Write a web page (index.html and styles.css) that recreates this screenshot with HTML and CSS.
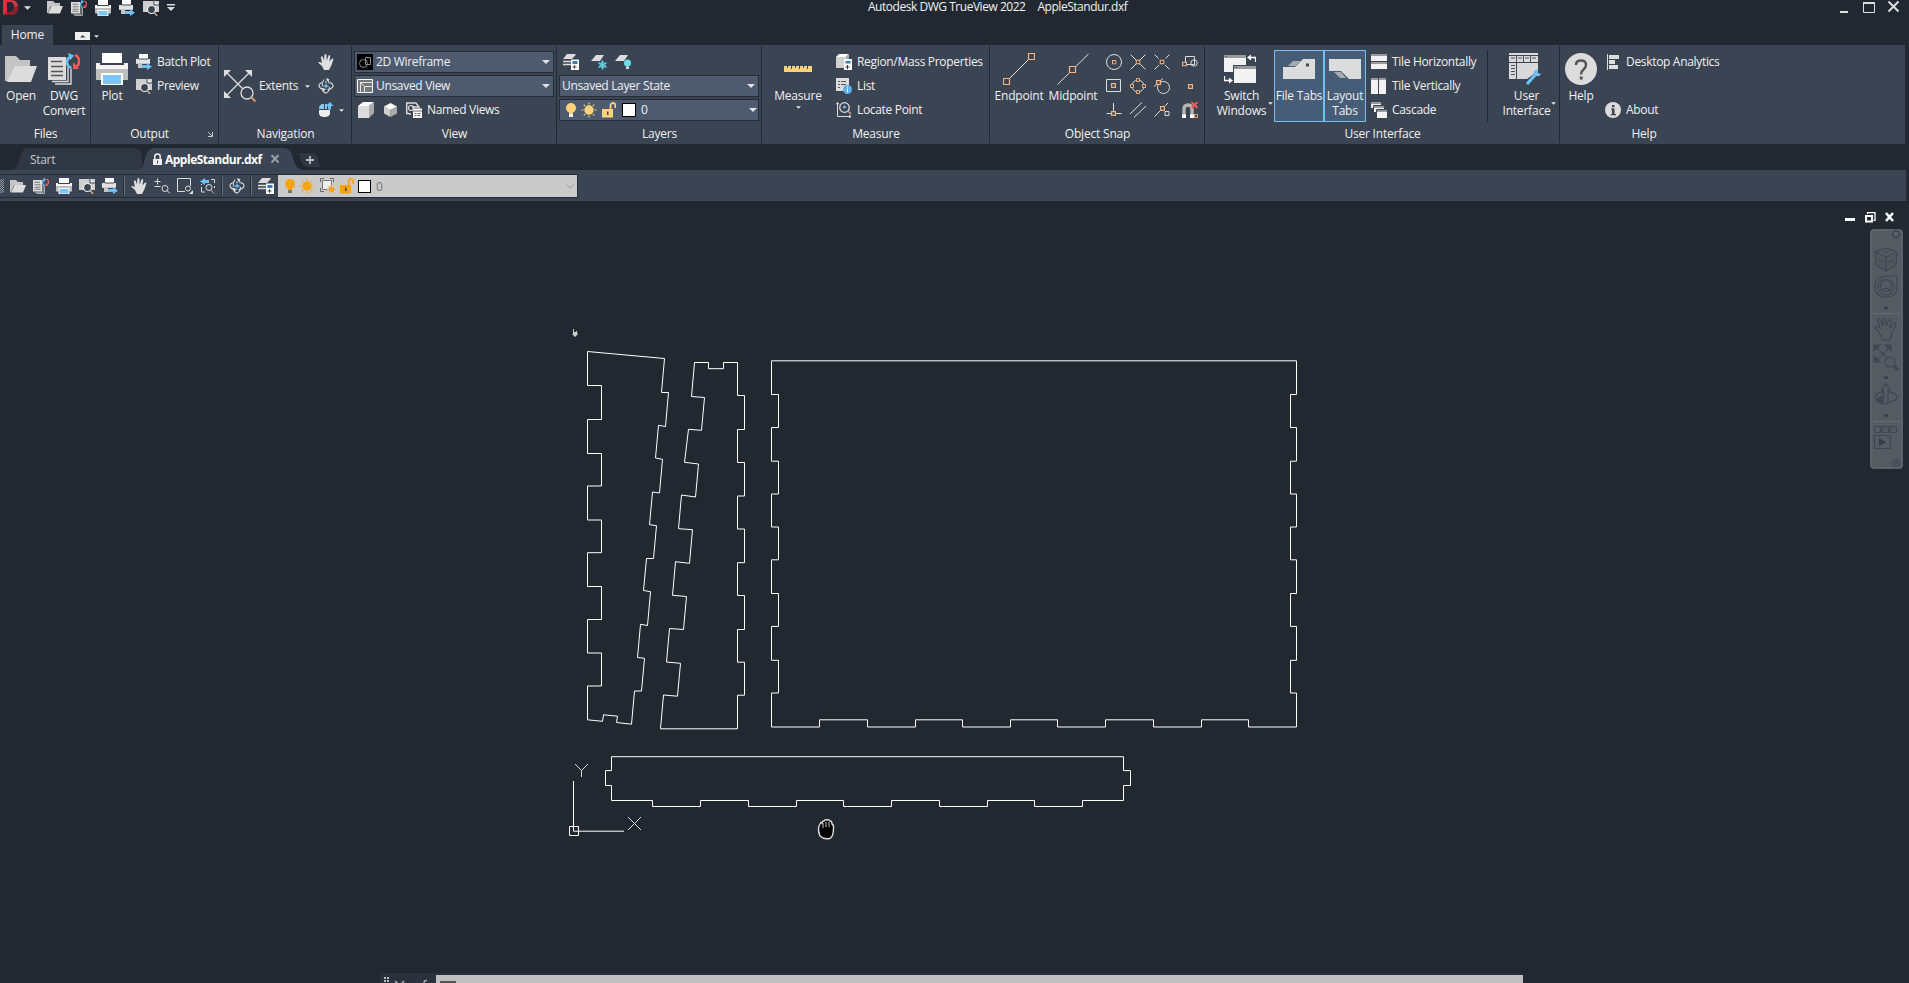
FILE: index.html
```html
<!DOCTYPE html>
<html lang="en">
<head>
<meta charset="utf-8">
<title>Autodesk DWG TrueView 2022</title>
<link rel="stylesheet" href="styles.css">
</head>
<body>
<svg class="defs" width="0" height="0">
  <symbol id="folder" viewBox="0 0 16 13"><path d="M0 12V0h6l2 2h5v3H4L1 12z" fill="#c6c6c6"/><path d="M4.500 5H16l-3 7.500H1z" fill="#dcdcdc"/></symbol>
  <symbol id="convert" viewBox="0 0 32 32"><path d="M0 4h18v23H0z" fill="#dcdcdc"/><path d="M3 8.500h11M3 13.500h12M3 18.500h12M3 22.500h12" stroke="#555" stroke-width="1.500"/><path d="M4 28.500h16V14M7 31h16V16" stroke="#dcdcdc" stroke-width="1.400" fill="none"/><path d="M23.500 15c-6-2-6-10 0-11.500" stroke="#6fc0f5" stroke-width="2.600" fill="none"/><path d="M20 0l6 2.500-4 5z" fill="#6fc0f5"/><path d="M27 2c5 2 6 10 0 12" stroke="#f25b5b" stroke-width="2.600" fill="none"/><path d="M25 9v7h6z" fill="#f25b5b"/></symbol>
  <symbol id="printer" viewBox="0 0 32 32"><path d="M6 0h20v10H6z" fill="#fff"/><path d="M0 10h32v8H0z" fill="#f4f4f4"/><path d="M0 16h32v11H0z" fill="#bdbdbd"/><path d="M4 10h24v2H4z" fill="#3b4453"/><path d="M5 20h22v12H5z" fill="#fff"/><path d="M7 22h18v9H7z" fill="#7cc5f8"/></symbol>
  <symbol id="batch" viewBox="0 0 16 16"><path d="M3 0h9v5H3z" fill="#fff"/><path d="M0 5h14v4H0z" fill="#e2e2e2"/><path d="M3 4.500h9v1H3z" fill="#3b4453"/><path d="M0 9h14v1H0zM2 10h4v4H2z" fill="#c5c5c5"/><path d="M6 11h5V9l5 3.800L11 16v-2H6z" fill="#6fc0f5"/></symbol>
  <symbol id="preview" viewBox="0 0 16 16"><path d="M0 1h10l6 0v11H0z" fill="#cfcfcf"/><path d="M11 0v5h5" fill="#eee" stroke="#3b4453"/><circle cx="8.500" cy="9.500" r="4" fill="#3b4453" stroke="#eee" stroke-width="1.200"/><path d="M11.300 12.300L14 16" stroke="#d5b58e" stroke-width="1.400"/></symbol>
  <symbol id="hand" viewBox="0 0 16 16"><path d="M6 16L4 12 0 8.600q1.500-1.600 4 .7L2.800 3Q4 1.500 5 3.500l1 3L6.400.8q1.200-1.500 2 0L8.800 6.500 10.500 1.500q1.300-1 1.700.5L11.500 7.500 14 4.500q1.500-.5 1.300 1L13.500 11 11 16z" fill="#dedede"/></symbol>
  <symbol id="orbit" viewBox="0 0 16 16"><path d="M6 1.500Q4 4 4.200 8.500M5 12q1 3 3 3 3-.5 3.500-6M11.300 5.500Q10.500 1.500 8.500 1" fill="none" stroke="#ddd" stroke-width="1.100"/><path d="M4 4.500Q.5 6 1 8q1 3 5 3.500M12 4.500Q15.500 6 15 8q-1 3-5.500 3.800M7 4h2" fill="none" stroke="#ddd" stroke-width="1.100"/><path d="M8 5.500v5M5.500 8h5" stroke="#6fc0f5" stroke-width="1.300"/><path d="M4 9.500l4 2-3.500 2z" fill="#ddd"/><path d="M8.500 0l3 1.500-2.500 2z" fill="#ddd"/></symbol>
  <symbol id="layers" viewBox="0 0 16 16"><path d="M4 0h9L9 5H0z" fill="#dcdcdc"/><path d="M0 7.500h8M0 10.500h8M8 4l4-3" stroke="#dcdcdc" stroke-width="1.500"/><path d="M8 5.500h8V16H8z" fill="#fff"/><path d="M9.500 7h5v3h-5z" fill="#357dbd"/><path d="M9.500 13h4M11.500 11.200v3.500" stroke="#444"/></symbol>
  <symbol id="bulb" viewBox="0 0 10 15"><circle cx="5" cy="5" r="5"/><path d="M3 9h4v2H3z"/><path d="M3 11h4v3H3z" fill="var(--base,#f5f5f5)"/></symbol>
  <symbol id="sun" viewBox="0 0 16 16"><circle cx="8" cy="8" r="4.700"/><path d="M8 .5v2M8 13.500v2M.5 8h2M13.500 8h2M2.700 2.700l1.500 1.500M11.800 11.800l1.500 1.500M13.300 2.700l-1.500 1.500M4.200 11.800l-1.500 1.500" stroke="currentColor" stroke-width="1.100"/></symbol>
  <symbol id="lock" viewBox="0 0 14 16"><path d="M8.500 7V4Q8.500 1 11 1t2.300 3v2" fill="none" stroke="currentColor" stroke-width="1.800"/><path d="M0 7h11v8.500H0z"/><path d="M5 9.500h1.500V13H5z" fill="#3b4453"/></symbol>
  <symbol id="down" viewBox="0 0 8 4"><path d="M0 0h8L4 4z" fill="#e3e3e3"/></symbol>
  <symbol id="box" viewBox="0 0 5 5"><path d="M.6.6h3.800v3.800H.6z" fill="#3b4453" stroke="#f7b27f" stroke-width="1.200"/></symbol>
</svg>

<header class="titlebar">
  <svg class="logo" width="16" height="15" viewBox="0 0 16 15"><path fill-rule="evenodd" d="M0 0h8q7 0 7 7t-7 8H0zM4 2v10h3q4 0 4-5T7 2z" fill="#d4343f"/><path d="M0 15l4-3h3q4 0 4-5l4-1q0 9-7 9z" fill="#8e1f2b"/></svg>
  <svg class="qa-arrow" width="7" height="4"><use href="#down"/></svg>
  <div class="quick">
    <svg width="16" height="13"><use href="#folder"/></svg>
    <svg width="16" height="16"><use href="#convert"/></svg>
    <svg width="16" height="16"><use href="#printer"/></svg>
    <svg width="16" height="16"><use href="#batch"/></svg>
    <svg width="16" height="16"><use href="#preview"/></svg>
    <svg width="8" height="7" viewBox="0 0 8 7"><path d="M0 0h8v1.500H0zM0 3h8L4 7z" fill="#ddd"/></svg>
  </div>
  <div class="caption"><span>Autodesk DWG TrueView 2022</span><span>AppleStandur.dxf</span></div>
  <svg class="wincontrols" width="60" height="14" viewBox="0 0 60 14"><path d="M0 11h8v2H0z" fill="#ddd"/><path d="M23.500 2.500h11v10h-11z" fill="none" stroke="#ddd"/><path d="M23 2h12v2H23z" fill="#ddd"/><path d="M48.500 1.500l10 10M58.500 1.500l-10 10" stroke="#ddd" stroke-width="2"/></svg>
</header>

<nav class="ribbontabs">
  <span class="home">Home</span>
  <svg class="toggle" width="15" height="8"><path d="M0 0h15v8H0z" fill="#eee"/><path d="M5 5.500h5.500L7.700 3z" fill="#444"/></svg>
  <svg width="5" height="3"><use href="#down"/></svg>
</nav>

<main class="ribbon">
  <section class="panel p-files">
    <div class="body">
      <div class="big"><svg width="32" height="32" viewBox="0 0 32 32"><path d="M0 28V3h11l4 4h10v6H9L3 28z" fill="#c4c4c4"/><path d="M9 13h23l-6 16H2z" fill="#dcdcdc"/></svg><span>Open</span></div>
      <div class="big"><svg width="32" height="32"><use href="#convert"/></svg><span>DWG<br>Convert</span></div>
    </div>
    <h2>Files</h2>
  </section>
  <section class="panel p-output">
    <div class="body">
      <div class="big"><svg width="32" height="32"><use href="#printer"/></svg><span>Plot</span></div>
      <div class="rows">
        <div><svg width="16" height="16"><use href="#batch"/></svg>Batch Plot</div>
        <div><svg width="16" height="16"><use href="#preview"/></svg>Preview</div>
      </div>
    </div>
    <h2>Output</h2>
    <svg class="launcher" width="5" height="5"><path d="M0 0l4 4M4.500 0v4.500H0" stroke="#ccc" fill="none"/></svg>
  </section>
  <section class="panel p-nav">
    <div class="body">
      <div class="extents"><svg width="32" height="32" viewBox="0 0 32 32"><path d="M2 2l26 26M26 2L2 26" stroke="#ddd" stroke-width="1.300"/><path d="M0 0h7L0 7zM28 0v7l-7-7zM0 28v-7l7 7z" fill="#ddd"/><circle cx="23" cy="23" r="6" fill="#3b4453" stroke="#ddd" stroke-width="1.300"/><path d="M27 27l4.500 4.500" stroke="#c99b6a" stroke-width="2"/></svg><span>Extents</span><svg width="5" height="3"><use href="#down"/></svg></div>
      <div class="rows tools">
        <div><svg width="16" height="16"><use href="#hand"/></svg></div>
        <div><svg width="16" height="16"><use href="#orbit"/></svg></div>
        <div><svg width="16" height="16" viewBox="0 0 16 16"><path d="M1 8h11v3q0 4-5.500 4T1 11z" fill="#eee"/><path d="M1 7q0-4 3-5h2v5zM7 2h2v5H7z" fill="#8cc7ee"/><path d="M10 7.500V4H8l4-4 3.500 4H13v3.500z" fill="#6fc0f5"/></svg><svg width="5" height="3"><use href="#down"/></svg></div>
      </div>
    </div>
    <h2>Navigation</h2>
  </section>
  <section class="panel p-view">
    <div class="body stack">
      <div class="combo"><svg width="16" height="16" viewBox="0 0 16 16"><path d="M0 0h16v16H0z" fill="#000"/><circle cx="6.500" cy="9.500" r="4" fill="none" stroke="#8b8b8b"/><path d="M8.500 3.500h5v7h-5z" fill="none" stroke="#8b8b8b"/></svg><span>2D Wireframe</span><svg width="8" height="4"><use href="#down"/></svg></div>
      <div class="combo"><svg width="16" height="14" viewBox="0 0 16 14"><path d="M.5.500h15v13H.5z" fill="#777" stroke="#fff"/><path d="M3.500 13.500v-10h12M7.500 13.500v-6h8" fill="none" stroke="#e5e5e5"/><path d="M3.500 3.500l4 4" stroke="#ddd"/></svg><span>Unsaved View</span><svg width="8" height="4"><use href="#down"/></svg></div>
      <div class="line views">
        <svg width="16" height="16" viewBox="0 0 16 16"><path d="M0 4h11v12H0z" fill="#dcdcdc"/><path d="M0 4l5-4h11l-5 4z" fill="#fff"/><path d="M11 4l5-4v11l-5 5z" fill="#aaa"/></svg>
        <svg width="13" height="14" viewBox="0 0 13 14"><path d="M6.500 0L13 3.500 6.500 7 0 3.500z" fill="#fff"/><path d="M0 3.500L6.500 7v7L0 10.500z" fill="#d0d0d0"/><path d="M13 3.500L6.500 7v7l6.500-3.500z" fill="#aaa"/></svg>
        <svg width="16" height="16" viewBox="0 0 16 16"><path d="M.7 10V1H10l3 4H6M3 11.500H.7v-3M5 12H3" fill="none" stroke="#ddd" stroke-width="1.400"/><circle cx="5" cy="6" r="2.500" fill="none" stroke="#ddd" stroke-width="1.200"/><path d="M7 6.500h9V16H7z" fill="#fff"/><path d="M7 9h9M8.500 11.500h2M8.500 13.500h2M11.500 11.500h3M11.500 13.500h3" stroke="#666"/></svg>
        <span>Named Views</span>
      </div>
    </div>
    <h2>View</h2>
  </section>
  <section class="panel p-layers">
    <div class="body stack">
      <div class="line layertools">
        <svg width="16" height="16"><use href="#layers"/></svg>
        <svg width="16" height="16" viewBox="0 0 16 16"><path d="M5 1h8L9 7H0z" fill="#dcdcdc"/><path d="M11.500 6.500v9M7.500 8.700l8 4.600M15.500 8.700l-8 4.600" stroke="#63cfe0" stroke-width="1.500"/><circle cx="11.500" cy="11" r="2.600" fill="none" stroke="#63cfe0"/></svg>
        <svg width="16" height="16" viewBox="0 0 16 16"><path d="M5 1h8L9 7H0z" fill="#dcdcdc"/><circle cx="12.500" cy="9" r="3.500" fill="#6fdcea"/><path d="M11.200 12.500h2.600V15h-2.600z" fill="#eee"/></svg>
      </div>
      <div class="combo"><span>Unsaved Layer State</span><svg width="8" height="4"><use href="#down"/></svg></div>
      <div class="combo layer"><svg width="10" height="15"><use href="#bulb"/></svg><svg width="16" height="16"><use href="#sun"/></svg><svg width="14" height="16"><use href="#lock"/></svg><i class="swatch"></i><span>0</span><svg width="8" height="4"><use href="#down"/></svg></div>
    </div>
    <h2>Layers</h2>
  </section>
  <section class="panel p-measure">
    <div class="body">
      <div class="big"><svg width="32" height="32" viewBox="0 0 32 32"><path d="M2 13h28v6H2z" fill="#ffd27b"/><path d="M5.500 13v2M9.500 13v3M13.500 13v2M17.500 13v3M21.500 13v2M25.500 13v3" stroke="#3b4453"/></svg><span>Measure</span><svg class="under" width="5" height="3"><use href="#down"/></svg></div>
      <div class="rows">
        <div><svg width="16" height="16" viewBox="0 0 16 16"><path d="M0 3h10v11H0z" fill="#d0d0d0"/><path d="M0 3l3-3h10l-3 3z" fill="#fff"/><path d="M10 3l3-3v6h-3z" fill="#aaa"/><path d="M8 5h8v11H8z" fill="#fff"/><path d="M9.500 7h5v2.500h-5z" fill="#357dbd"/><path d="M9.500 13h4M11.500 11v4" stroke="#333"/></svg>Region/Mass Properties</div>
        <div><svg width="16" height="16" viewBox="0 0 16 16"><path d="M0 0h13v13H0z" fill="#dcdcdc"/><path d="M2 3.500h2M5 3.500h5M2 6.500h2M5 6.500h5M2 9.500h2" stroke="#555"/><circle cx="11.500" cy="11.500" r="4.500" fill="#5db0ea"/><path d="M11.500 10.500v4M11.500 8.500v1.200" stroke="#fff"/></svg>List</div>
        <div><svg width="16" height="16" viewBox="0 0 16 16"><path d="M1.500 1v13.500H15M0 2.500L1.500.5 3 2.500M13 13l2 1.500-2 1.500" fill="none" stroke="#ddd"/><circle cx="8.500" cy="5.500" r="4.800" fill="none" stroke="#ddd" stroke-width="1.300"/><circle cx="8.500" cy="5" r="1.500" fill="#6fc0f5"/><path d="M12 9l3 3" stroke="#c9a77f" stroke-width="1.500"/></svg>Locate Point</div>
      </div>
    </div>
    <h2>Measure</h2>
  </section>
  <section class="panel p-snap">
    <div class="body">
      <div class="big"><svg width="32" height="32" viewBox="0 0 32 32"><path d="M3 29L29 3" stroke="#ddd"/><path d="M.5 25.500h6v6h-6zM25.500.5h6v6h-6z" fill="#3b4453" stroke="#f7b27f" stroke-width="1.200"/></svg><span>Endpoint</span></div>
      <div class="big"><svg width="32" height="32" viewBox="0 0 32 32"><path d="M.5 31.500l31-30.500" stroke="#ddd"/><path d="M12.500 13.500h6v6h-6z" fill="#3b4453" stroke="#f7b27f" stroke-width="1.200"/></svg><span>Midpoint</span></div>
      <div class="snapgrid">
        <svg viewBox="0 0 16 16"><circle cx="8" cy="8" r="7.500"/><use href="#box" x="6" y="6" width="4.500" height="4.500"/></svg>
        <svg viewBox="0 0 16 16"><path d="M.5.500l15 15M15.500.5l-15 15"/><use href="#box" x="5.500" y="5.500" width="5" height="5"/></svg>
        <svg viewBox="0 0 16 16"><path d="M.5.500l4 4M11 11l4.500 4.500M15.500.500l-4 4M5 11L.5 15.500"/><use href="#box" x="5.500" y="5.500" width="5" height="5"/></svg>
        <svg viewBox="0 0 16 16"><path d="M3.500 8V2.500h9v8M5 10.500h8"/><circle cx="12" cy="9" r="3.200"/><use href="#box" x="0" y="7.500" width="5" height="5"/></svg>
        <svg viewBox="0 0 16 16"><path d="M.5 1.500h14v12H.5z"/><use href="#box" x="5" y="5" width="5" height="5"/></svg>
        <svg viewBox="0 0 16 16"><circle cx="8" cy="8" r="6"/><use href="#box" x="6" y="0" width="4" height="4"/><use href="#box" x="6" y="12" width="4" height="4"/><use href="#box" x="0" y="6" width="4" height="4"/><use href="#box" x="12" y="6" width="4" height="4"/></svg>
        <svg viewBox="0 0 16 16"><circle cx="9.500" cy="9.500" r="6"/><path d="M0 8.500L9 .5"/><use href="#box" x="2" y="2" width="5" height="5"/></svg>
        <svg viewBox="0 0 16 16"><use href="#box" x="6" y="6" width="5" height="5"/></svg>
        <svg viewBox="0 0 16 16"><path d="M.5 11.500h15M7.500 1v10"/><use href="#box" x="5" y="9" width="5" height="5"/></svg>
        <svg viewBox="0 0 16 16"><path d="M0 12L12 .5M4 15.500L16 4"/></svg>
        <svg viewBox="0 0 16 16"><path d="M.5 14.500L14 1M11 9.500h4v4h-4zM9 7l2 2"/><use href="#box" x="6" y="4" width="5" height="5"/></svg>
        <svg viewBox="0 0 16 16"><path d="M2 13V7.500q0-4.500 4-4.500t4 4.500V13" stroke="#b5b5b5" stroke-width="3.400"/><path d="M0 12.500h4V16H0zM8 12.500h4V16H8z" fill="#fff" stroke="none"/><path d="M9.500 0l6 6M15.500 0l-6 6" stroke="#f25b5b" stroke-width="2"/><use href="#box" x="12" y="12" width="4" height="4"/></svg>
      </div>
    </div>
    <h2>Object Snap</h2>
  </section>
  <section class="panel p-ui">
    <div class="body">
      <div class="big switch"><svg width="32" height="32" viewBox="0 0 32 32"><path d="M0 2h22v17H0z" fill="#f2f2f2"/><path d="M0 2h22v3H0z" fill="#9a9a9a"/><path d="M9 12h23v18H9z" fill="#3b4453"/><path d="M10 13h22v17H10z" fill="#f2f2f2"/><path d="M10 13h22v3H10z" fill="#9a9a9a"/><path d="M1.500 3.500h1M12 14.500h1" stroke="#333"/><path d="M31.500 9V4.500H25M.5 23v4.500H7" stroke="#fff" fill="none" stroke-width="1.300"/><path d="M23 4.500l4-3v6zM9 27.500l-4-3v6z" fill="#fff"/></svg><span>Switch<br>Windows</span><svg class="side" width="5" height="3"><use href="#down"/></svg></div>
      <div class="big on filetabs"><svg width="32" height="32" viewBox="0 0 32 32"><path d="M0 14h12l8-8h12v20H0z" fill="#dcdcdc"/><path d="M10 8h8l-6 5H5z" fill="#a9adb2"/><path d="M23 10.500h3v3h-3z" fill="#444"/></svg><span>File Tabs</span></div>
      <div class="big on layouttabs"><svg width="32" height="32" viewBox="0 0 32 32"><path d="M0 6h32v20H20l-8-8H0z" fill="#dcdcdc"/><path d="M5 19h7l5 6h-6z" fill="#a9adb2"/></svg><span>Layout<br>Tabs</span></div>
      <div class="rows">
        <div><svg width="16" height="16" viewBox="0 0 16 16"><path d="M0 0h16v7H0zM0 8h16v7H0z" fill="#f2f2f2"/><path d="M0 0h16v2H0zM0 8h16v2H0z" fill="#9a9a9a"/></svg>Tile Horizontally</div>
        <div><svg width="16" height="16" viewBox="0 0 16 16"><path d="M0 0h7v16H0zM8 0h7v16H8z" fill="#f2f2f2"/><path d="M0 0h7v2H0zM8 0h7v2H8z" fill="#9a9a9a"/></svg>Tile Vertically</div>
        <div><svg width="16" height="16" viewBox="0 0 16 16"><path d="M0 0h10v6H0z" fill="#f2f2f2"/><path d="M0 0h10v2H0z" fill="#9a9a9a"/><path d="M2.500 3.500h11v7h-11z" fill="#f2f2f2" stroke="#3b4453"/><path d="M3 4h10v2H3z" fill="#9a9a9a"/><path d="M5.500 7.500h11v9h-11z" fill="#f2f2f2" stroke="#3b4453"/><path d="M6 8h10v2H6z" fill="#9a9a9a"/></svg>Cascade</div>
      </div>
      <div class="big userif"><svg width="32" height="32" viewBox="0 0 32 32"><path d="M0 0h29v2H0zM0 3h29v6H0zM0 10h7v16H0zM8 10h21v8L18 26H8z" fill="#d9d9d9"/><path d="M7.500 3v6M14.500 3v6M21.500 3v6M2 5h4M9 5h4M16 5h4M23 5h4M2 12.500h4M2 15.500h4M2 18.500h4M2 21.500h4" stroke="#4b525e"/><path d="M18 31l9-10" stroke="#6fc0f5" stroke-width="3.200"/><path d="M25 22q-2-4 3-6l1 4 3 1q-2 4-7 1z" fill="#6fc0f5"/></svg><span>User<br>Interface</span><svg class="side" width="5" height="3"><use href="#down"/></svg></div>
    </div>
    <h2>User Interface</h2>
  </section>
  <section class="panel p-help">
    <div class="body">
      <div class="big"><svg width="32" height="32" viewBox="0 0 32 32"><circle cx="16" cy="16" r="16" fill="#dcdcdc"/><path d="M11 12q0-4.500 5-4.500t5 4.500q0 2.500-2.500 4.500t-2.500 5" fill="none" stroke="#555" stroke-width="2.500"/><path d="M14.700 23.500h3v3h-3z" fill="#555"/></svg><span>Help</span></div>
      <div class="rows">
        <div><svg width="16" height="16" viewBox="0 0 16 16"><path d="M2.500 0v16" stroke="#ddd"/><path d="M4 1h10v4H4zM4 6h6v4H4zM4 11h9v4H4z" fill="#ddd"/></svg>Desktop Analytics</div>
        <div></div>
        <div><svg width="16" height="16" viewBox="0 0 16 16"><circle cx="8" cy="8" r="8" fill="#dcdcdc"/><path d="M7 3h2.500v2.200H7zM6 6.500h3.500V12H11v1.300H5.700V12H7V7.800H6z" fill="#3f4652"/></svg>About</div>
      </div>
    </div>
    <h2>Help</h2>
  </section>
</main>

<nav class="filetabbar">
  <svg class="tabshapes" width="330" height="26" viewBox="0 0 330 26"><path d="M12 26Q17 25 20 14q2-10 8-10h106q8 0 8 10v12z" fill="#2f3744"/><path d="M140 26q3-1 5-12 2-10 10-10h129q7 0 9 10 3 11 9 12z" fill="#3b4453"/><path d="M299 9h13q5 0 6 6 1 5 3 8h-13q-5 0-7-6z" fill="#2f3744"/><path d="M306 16h8M310 12v8" stroke="#b8bcc2" stroke-width="1.800"/><path d="M271.500 11l7 7.500M278.500 11l-7 7.500" stroke="#9aa0a8" stroke-width="1.900"/><path d="M153 15h9v6h-9z" fill="#eee"/><path d="M154.800 15v-2.500q0-2.500 2.700-2.500t2.700 2.500V15" fill="none" stroke="#eee" stroke-width="1.500"/><path d="M157 16.500h1v3h-1z" fill="#3b4453"/></svg>
  <span class="t-start">Start</span>
  <span class="t-active">AppleStandur.dxf</span>
</nav>

<div class="toolbar">
  <div class="tools-strip">
    <i class="grip"></i>
    <svg width="16" height="13"><use href="#folder"/></svg>
    <svg width="16" height="16"><use href="#convert"/></svg>
    <svg width="16" height="16"><use href="#printer"/></svg>
    <svg width="16" height="16"><use href="#preview"/></svg>
    <svg width="16" height="16"><use href="#batch"/></svg>
    <i class="sep"></i>
    <svg width="16" height="16"><use href="#hand"/></svg>
    <svg width="16" height="16" viewBox="0 0 16 16" fill="none" stroke="#ddd"><path d="M.5 3.500h6M3.500.5v6M.5 8.500h6"/><circle cx="11" cy="10.500" r="3"/><path d="M13 12.500l3 3"/></svg>
    <svg width="16" height="16" viewBox="0 0 16 16" fill="none" stroke="#ddd"><path d="M8 13.500H.5v-13h13V8"/><circle cx="11" cy="10.500" r="2.500"/><path d="M12 16h4v-4z" fill="#ddd" stroke="none"/></svg>
    <svg width="16" height="16" viewBox="0 0 16 16" fill="none" stroke="#ddd"><path d="M11 1.500h3.500V5M14.500 8v2M1.500 9v5H5M1.500 7V6"/><circle cx="9" cy="9.500" r="3"/><path d="M11 12l3 3.500" stroke="#c9a77f"/><path d="M0 3.500L5 0v2h4v3H5v2z" fill="#6fc0f5" stroke="none"/></svg>
    <i class="sep"></i>
    <svg width="16" height="16"><use href="#orbit"/></svg>
    <i class="sep"></i>
    <svg width="16" height="16"><use href="#layers"/></svg>
    <div class="greycombo">
      <svg width="10" height="15"><use href="#bulb"/></svg>
      <svg width="16" height="16"><use href="#sun"/></svg>
      <svg class="vp" width="16" height="16" viewBox="0 0 16 16"><path d="M2.500 2.500h9v9h-9z" fill="#eee" stroke="#777"/><path d="M.5 4V.5H4M10 .5h3.500V4M.5 10v3.500H4" fill="none" stroke="#666"/><circle cx="11.500" cy="11.500" r="4.200" fill="#ccc"/><circle cx="11.500" cy="11.500" r="2.600"/><path d="M11.500 7v9M7 11.500h9M8.500 8.500l6 6M14.500 8.500l-6 6" stroke="#f7a413" stroke-width=".8"/></svg>
      <svg width="14" height="16"><use href="#lock"/></svg>
      <i class="swatch"></i><span>0</span>
      <svg class="chev" width="8" height="5" viewBox="0 0 8 5"><path d="M.5.5L4 4 7.500.5" stroke="#999" fill="none"/></svg>
    </div>
  </div>
</div>

<div class="canvas">
  <svg class="drawing" width="1909" height="782" viewBox="0 201 1909 782" fill="none" stroke="#fff">
    <path d="M587.500 351.500V385.500H601.500V419.500H587.500V453.500H601.500V486H587.500V520H601.500V552.700H587.500V586.500H601.500V619.500H587.500V653H601.500V686H587.500V719.800L602.500 721.300 603.500 714.800 617.500 716.200 616.500 722.500 631.500 724.200 634.500 691H641.500L644.500 658.300 637.500 657.500 640.500 624.300 647.500 625.500 650.500 591.700 643.500 590.500 646.500 558.500H653.500L656.500 525.700 649.500 524.700 652.500 492 659.500 493 662.500 459.300 655.500 458 658.500 425.300 665.500 426.500 668.500 392.500H661.500L664.500 358.500Z"/>
    <path d="M694.500 362.500H708.500V368.700H723.500V362.500H737.500V395.500H744.500V429.500H737.500V462.500H744.500V496H737.500V529H744.500V562.700H737.500V595.500H744.500V629.500H737.500V662.200H744.500V695.200H737.500V728.800H660.500L663.500 695 677.500 696.200 680.500 663.300 666.500 662 669.500 628.500 683.500 629.500 686.500 596.500 672.500 595.300 675.500 561.700 689.500 563.300 692.500 529.700 678.500 528.700 681.500 495 695.500 497 698.500 464 684.500 462.300 688.500 429.300 701.500 430.300 704.500 397.500 691.500 396.500Z"/>
    <path d="M771.500 360.800H1296.500V394.500H1290.500V427.500H1296.500V461.200H1290.500V494H1296.500V527H1290.500V559.800H1296.500V593.500H1290.500V626.400H1296.500V660.300H1290.500V693H1296.500V727H1248.500V719.800H1201.500V727H1153.500V719.800H1105.500V727H1057.500V719.800H1010.500V727H962.500V719.800H915.500V727H867.500V719.800H819.500V727H771.500V693H778.500V660.300H771.500V626.400H778.500V593.500H771.500V559.800H778.500V527H771.500V494H778.500V461.200H771.500V427.500H778.500V394.500H771.500Z"/>
    <path d="M611.500 756.700H1123.500V770.600H1130.500V785.500H1123.500V800.500H1082.500V806.500H1034.500V800.500H987.500V806.500H939.500V800.500H891.500V806.500H843.500V800.500H796.500V806.500H748.500V800.500H700.500V806.500H652.500V800.500H611.500V785.500H605.500V770.600H611.500Z"/>
    <path d="M573.500 781v50.200H624M569.500 826.500h9v9h-9z"/>
    <path d="M575 764l6.500 6.500 6.500-6.500M581.500 770.500V777M628 817l13 13M641 817l-13 13" stroke="#dcdcdc"/>
    <path d="M573 329h1v3h2v-1h1v2l1 1-3 3-3-3h1z" fill="#ccc" stroke="none"/>
    <path d="M820 836q-3-7 0-12 1-2 2-1 0-2 2-2 1-2 3-1 2-1 3 1 2 0 2 3 2 1 1.500 4 0 9-4 10.500-6 1-9.500-2.500z" fill="#000" stroke="#ddd" stroke-width="1.400"/>
    <path d="M823 823v5M826 822v5M829 822v5" stroke="#ddd" stroke-width=".9"/>
  </svg>

  <svg class="docctl" width="51" height="11" viewBox="0 0 51 11"><path d="M0 6h10v3H0z" fill="#fff"/><path d="M22.500 2V.7H30v7.600h-1.500" fill="none" stroke="#fff" stroke-width="1.300"/><path d="M21 4h6v5.500h-6z" fill="none" stroke="#fff" stroke-width="2"/><path d="M41 1l7 8M48 1l-7 8" stroke="#fff" stroke-width="2.600"/></svg>

  <svg class="navbar" width="33" height="240" viewBox="0 0 33 240">
    <rect x=".8" y=".8" width="31.400" height="238.400" rx="3" fill="#555b61" stroke="#686e73" stroke-width="1.200"/>
    <g fill="none" stroke="#40474f" stroke-width="1.200">
      <circle cx="26" cy="5" r="3.500" fill="#474e55"/><path d="M24.500 3.500l3 3M27.500 3.500l-3 3" stroke="#70757a"/>
      <path d="M16 19l11 4-1 13-10 6-10-6-1-13zM5 23l11 5 11-5M16 28v14M8 31l5 2M19 33l4-2M13 23h6" fill="#50575f"/>
      <path d="M27 47v11q0 10-11 10T5 58t11-11z"/><circle cx="16" cy="58" r="8"/><circle cx="16" cy="57" r="5.500"/><path d="M11 62q5-5 10 0"/>
      <path d="M13 78h6l-3 3zM13 147.500h6l-3 3zM13 185.500h6l-3 3z" fill="#343b43" stroke="none"/>
      <path d="M13 111l-3-6-5-6q1-3 5 0L8 91q2-2 3 1l2 5 0-7q2-2 3 0v7l3-6q2-1 2 1l-1 7 4-5q2-1 2 1l-4 9-2 7z"/>
      <path d="M6 118l14 14M20 118L6 132"/><path d="M4 116h6l-6 6zM21 116v6l-6-6zM4 133v-6l6 6z" fill="#40474f"/><circle cx="20" cy="133" r="5" fill="#555b61"/><path d="M24 137l4 4" stroke-width="3"/>
      <ellipse cx="16" cy="168" rx="11" ry="5.500"/><path d="M13.500 175v-14h-2l4.500-6 4 6h-2v14z" fill="#555b61"/><path d="M6 171l6-4v8z" fill="#40474f"/>
      <path d="M4.500 197.500h6v6h-6zM12.500 197.500h6v6h-6zM20.500 197.500h6v6h-6zM4.500 206.500h16v13h-16z"/><path d="M9 209v8l7-4z" fill="#343b43" stroke="none"/>
      <circle cx="26" cy="234" r="3.500"/><path d="M24 233h4M24 235h4"/>
      <path d="M3 84.500h27M3 192.500h27" stroke="#656b71"/>
    </g>
  </svg>

  <div class="cmdline">
    <svg class="cmdhandle" width="56" height="10" viewBox="0 0 56 10"><path d="M4 4h2v2H4zM7 4h2v2H7zM4 7h2v2H4zM7 7h2v2H7z" fill="#bbb"/><path d="M15 8l3 3M24 8l-3 3M44 10q0-3 3-2.500" stroke="#aaa" stroke-width="1.600" fill="none"/></svg>
    <div class="cmdinput"><i></i></div>
  </div>
</div>
</body>
</html>
```
FILE: styles.css
```css
* { box-sizing: border-box; }
body {
  margin: 0;
  width: 1909px;
  height: 983px;
  overflow: hidden;
  background: #222831;
  color: #f0f0f0;
  font: 12px/15px "Open Sans", "Noto Sans", sans-serif;
  letter-spacing: -0.32px;
  white-space: nowrap;
}
svg { display: block; flex: none; }
.defs { position: absolute; }

.titlebar {
  position: relative;
  display: flex;
  height: 25px;
  padding-left: 3px;
}
.qa-arrow { margin: 6px 0 0 5px; }
.quick { display: flex; align-items: center; gap: 8px; height: 17px; margin: -1px 0 0 16px; }
.caption { position: absolute; left: 868px; top: -1px; display: flex; gap: 12px; letter-spacing: -0.47px; }
.wincontrols { position: absolute; left: 1840px; top: 0; }

.ribbontabs { display: flex; align-items: center; height: 20px; padding-left: 2px; }
.home {
  width: 51px;
  height: 20px;
  line-height: 20px;
  text-align: center;
  background: #3b4453;
  letter-spacing: -0.1px;
}
.toggle { margin: 2px 7px 0 22px; }
.ribbontabs > svg:last-child { margin: 2px 0 0 -3px; }

.ribbon { display: flex; width: 1905px; height: 99px; background: #3b4453; }
.panel { position: relative; flex: none; padding-top: 5px; }
.panel::after {
  content: "";
  position: absolute;
  right: 0;
  top: 1px;
  width: 1px;
  height: 97px;
  background: #222831;
}
.panel h2 { margin: 0; height: 22px; font: inherit; line-height: 23px; text-align: center; letter-spacing: -0.2px; }
.body { display: flex; height: 72px; }
.big { position: relative; display: flex; flex-direction: column; align-items: center; width: 42px; padding-top: 3px; text-align: center; flex: none; letter-spacing: -0.2px; }
.big > span { margin-top: 3px; }
.under { margin-top: 3px; }
.side { position: absolute; right: 0; top: 52px; }
.rows { display: flex; flex-direction: column; }
.rows > div { display: flex; align-items: center; gap: 5px; height: 24px; padding-bottom: 2px; }
.rows svg, .combo > svg, .combo > i, .line > svg { margin-top: 2px; }
.stack { flex-direction: column; gap: 2px; padding: 1px 0 0 2px; }

.p-files { width: 91px; }
.p-files .big + .big { width: 44px; }
.p-output { width: 128px; }
.p-output .rows { margin-left: 3px; }
.p-output h2 { padding-right: 11px; }
.launcher { position: absolute; right: 6px; bottom: 7px; }
.p-nav { width: 133px; }
.extents { display: flex; align-items: center; width: 99px; padding-left: 5px; gap: 3px; }
.extents span { margin-top: -2px; }
.extents svg:last-child { margin-left: 4px; }
.p-view { width: 205px; }
.p-layers { width: 205px; }

.combo {
  display: flex;
  align-items: center;
  gap: 3px;
  width: 200px;
  height: 22px;
  padding: 0 3px 2px 2px;
  border: 1px solid #252c37;
  background: #4e5a6e;
}
.combo > svg:last-child { margin-left: auto; }
.line { display: flex; align-items: center; height: 22px; padding-bottom: 2px; }
.views { padding-left: 4px; gap: 9px; }
.views svg:nth-child(2) { margin-left: 1px; }
.views span { margin-left: -4px; }
.layertools { padding-left: 4px; gap: 8px; }
.layertools svg:first-child { margin-right: 4px; }
.combo.layer { padding: 0 1px 2px 6px; gap: 5px; fill: #ffd27b; color: #ffd27b; }
.combo.layer span { color: #f0f0f0; }
.swatch { width: 14px; height: 14px; border: 1px solid #000; background: #fff; }
.layer .swatch { margin-left: 1px; }

.p-measure { width: 228px; }
.p-measure .big { width: 72px; }
.p-measure .rows { margin-left: 2px; }
.p-snap { width: 215px; }
.p-snap .big { width: 54px; }
.p-snap .big:first-child { margin-left: 2px; }
.snapgrid {
  display: grid;
  grid-template-columns: 24px 24px 28px 24px;
  grid-template-rows: repeat(3, 24px);
  align-items: center;
  margin-left: 6px;
  fill: none;
  stroke: #ddd;
}
.snapgrid svg { width: 16px; height: 16px; }
.p-ui { width: 355px; }
.p-ui .switch { width: 69px; padding-left: 1px; }
.switch span, .userif span { margin-left: 3px; }
.switch .side { right: 1px; }
.on { border: 1px solid #6fc0f5; background: #475c76; padding-top: 2px; }
.p-ui .filetabs { width: 50px; }
.p-ui .layouttabs { width: 42px; }
.p-ui .rows { width: 116px; margin-left: 5px; flex: none; }
.p-ui .userif { width: 72px; padding-left: 3px; border-left: 1px solid #222831; }
.userif .side { right: 3px; }
.p-help { width: 168px; }
.p-help::after { display: none; }
.p-help .rows { margin-left: 3px; }

.filetabbar { position: relative; height: 26px; }
.tabshapes { position: absolute; left: 0; top: 0; }
.filetabbar span { position: absolute; top: 8px; }
.filetabbar .t-start { left: 30px; color: #c5c8cc; }
.filetabbar .t-active { left: 165px; font-weight: 700; color: #fff; letter-spacing: -0.5px; }

.toolbar { width: 1906px; height: 31px; padding-top: 4px; background: #3b4453; }
.tools-strip {
  display: flex;
  align-items: center;
  gap: 7px;
  width: 578px;
  height: 24px;
  border: 1px solid #252c37;
  border-left: 0;
}
.grip { width: 4px; height: 14px; margin-right: -1px; background: repeating-conic-gradient(#9298a1 0 25%, #3b4453 0 50%) 0 0 / 2px 2px; }
.sep { width: 1px; height: 18px; margin: 0 -1px; background: #6a717c; box-shadow: -1px 0 #252c37; }
.greycombo {
  display: flex;
  align-items: center;
  gap: 4px;
  width: 299px;
  height: 22px;
  padding: 0 3px 0 7px;
  margin-left: -3px;
  background: #cacaca;
  color: #f7a413;
  fill: #f7a413;
  --base: #777;
}
.greycombo .vp { margin-left: 1px; }
.greycombo span { margin-left: 1px; color: #777; }
.greycombo .swatch { width: 13px; height: 13px; }
.greycombo .chev { margin-left: auto; }

.canvas { position: relative; height: 782px; background: #212830; }
.drawing { position: absolute; left: 0; top: 0; }
.docctl { position: absolute; left: 1845px; top: 11px; }
.navbar { position: absolute; left: 1870px; top: 28px; }
.cmdline { position: absolute; left: 380px; top: 772px; display: flex; width: 1143px; height: 10px; background: #2a303c; border-radius: 3px 3px 0 0; }
.cmdinput { flex: 1; margin-top: 2px; padding: 6px 0 0 4px; background: #bfbfbf; }
.cmdinput i { display: block; width: 16px; height: 3px; background: #555; }
```
